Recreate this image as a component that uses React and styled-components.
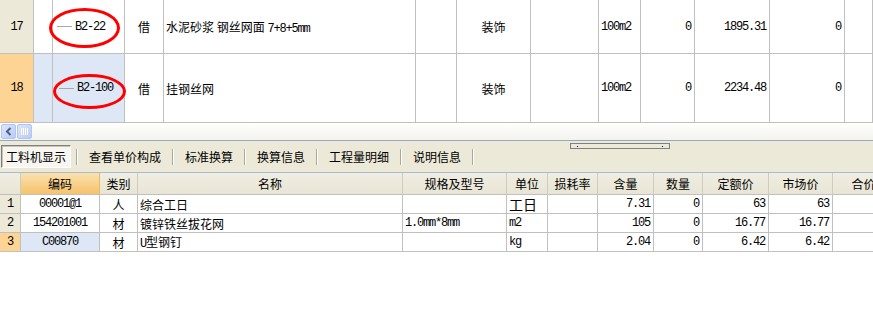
import React from "react";
import styled, { createGlobalStyle, css } from "styled-components";

const Global = createGlobalStyle`
  html, body { margin: 0; padding: 0; background: #fff; }
  body { width: 873px; height: 325px; overflow: hidden; font-family: "Noto Sans CJK SC", sans-serif; font-size: 12px; color: #000; }
`;

const Page = styled.div`
  width: 873px;
  height: 325px;
  overflow: hidden;
  position: relative;
  display: flex;
  flex-direction: column;
`;

const GRID_LINE = "#c0c0c0";

const TopGrid = styled.div`
  display: grid;
  grid-template-columns: 34px 19px 72px 39px 252px 41px 74px 68px 42px 54px 75px 75px 1fr;
`;

const monoText = css`
  font-family: "Liberation Mono", monospace;
  font-size: 12px;
  letter-spacing: -1.2px;
`;

const Cell = styled.div`
  position: relative;
  box-sizing: border-box;
  height: ${(p) => p.$h}px;
  border-right: 1px solid ${GRID_LINE};
  border-bottom: 1px solid ${GRID_LINE};
  background: ${(p) => p.$bg || "#fff"};
  display: flex;
  align-items: center;
  justify-content: ${(p) => (p.$align === "right" ? "flex-end" : p.$align === "center" ? "center" : "flex-start")};
  padding: ${(p) => (p.$align === "right" ? "0 3px 0 0" : p.$align === "center" ? "0" : "0 0 0 2px")};
  white-space: nowrap;
  ${(p) => p.$mono && monoText}
`;

const Mono = styled.span`
  ${monoText}
`;

const CodeWrap = styled.div`
  display: flex;
  align-items: center;
  gap: 3px;
  padding-left: ${(p) => p.$indent}px;
`;

const TreeLine = styled.span`
  width: 15px;
  height: 1px;
  background: #a8a8a8;
`;

const Ring = styled.div`
  position: absolute;
  z-index: 2;
  box-sizing: border-box;
  border: 3px solid #ff0000;
  border-radius: 50%;
  left: ${(p) => p.$l}px;
  top: ${(p) => p.$t}px;
  width: ${(p) => p.$w}px;
  height: ${(p) => p.$hh}px;
`;

const ScrollBar = styled.div`
  height: 17px;
  box-sizing: border-box;
  background: linear-gradient(#ffffff, #f3f2ec);
  display: flex;
  align-items: center;
  gap: 1px;
  padding-left: 1px;
`;

const ScrollBtn = styled.div`
  width: 15px;
  height: 15px;
  box-sizing: border-box;
  border: 1px solid #b4c6ee;
  border-radius: 2px;
  background: linear-gradient(135deg, #dce6fd, #b9cbf5);
  display: flex;
  align-items: center;
  justify-content: center;
`;

const Divider = styled.div`
  height: 1px;
  background: ${(p) => p.$c};
`;

const TabBar = styled.div`
  height: 31px;
  background: #ece9d8;
  display: flex;
  align-items: center;
  padding-left: 1px;
  position: relative;
`;

const Tab = styled.div`
  box-sizing: border-box;
  height: 23px;
  display: flex;
  align-items: center;
  padding: ${(p) => (p.$active ? "0 4px" : "0 10px")};
  font-size: 12px;
  ${(p) =>
    p.$active &&
    css`
      border: 1px solid;
      border-color: #808080 #ffffff #ffffff #808080;
      box-shadow: inset 1px 1px 0 #c8c4b4;
      background: #f7f6f0;
      margin-right: 4px;
    `}
`;

const Sep = styled.div`
  width: 1px;
  height: 16px;
  background: #aca899;
  border-right: 1px solid #fff;
  margin: 0 1px;
`;

const Grip = styled.div`
  position: absolute;
  left: 570px;
  top: 2px;
  width: 100px;
  height: 6px;
  box-sizing: border-box;
  border: 1px solid #808080;
  display: flex;
  align-items: center;
  justify-content: space-between;
  padding: 0 6px;
`;

const Dot = styled.span`
  width: 1px;
  height: 1px;
  background: #000080;
`;

const LowGrid = styled.div`
  display: grid;
  grid-template-columns: 21px 79px 38px 265px 104px 41px 50px 56px 49px 66px 64px 62px;
  width: 895px;
`;

const Head = styled.div`
  box-sizing: border-box;
  height: 22px;
  border-right: 1px solid ${(p) => (p.$hl ? "#e8b86a" : "#cfcbbd")};
  border-bottom: 1px solid ${GRID_LINE};
  background: ${(p) => (p.$hl ? "linear-gradient(#fbe1ae, #f5c36c)" : "linear-gradient(#f0eee2, #e8e5d5)")};
  display: flex;
  align-items: center;
  justify-content: center;
  font-size: 12px;
  white-space: nowrap;
`;

const Big = styled.span`
  font-size: 14px;
  line-height: 1;
`;

const Inline = styled.span`
  white-space: pre;
`;

const BEIGE = "#ece9d8";
const ORANGE = "#fed495";
const BLUE = "#dee7f5";

const topRows = [
  {
    h: 54, no: "17", sel: false, code: "B2-22", ring: { l: -4, t: 8, w: 71, h: 40 }, indent: 2,
    desc: ["水泥砂浆 钢丝网面 ", "7+8+5mm"], type: "装饰", unit: "100m2", a: "0", price: "1895.31", b: "0",
  },
  {
    h: 69, no: "18", sel: true, code: "B2-100", ring: { l: 0, t: 20, w: 73, h: 35 }, indent: 4,
    desc: ["挂钢丝网", ""], type: "装饰", unit: "100m2", a: "0", price: "2234.48", b: "0",
  },
];

const lowRows = [
  { no: "1", code: "00001@1", cat: "人", name: "综合工日", spec: "", unit: "工日", bigUnit: true, qty: "7.31", num: "0", quota: "63", market: "63" },
  { no: "2", code: "154201001", cat: "材", name: "镀锌铁丝拔花网", spec: "1.0mm*8mm", unit: "m2", qty: "105", num: "0", quota: "16.77", market: "16.77" },
  { no: "3", code: "C00870", cat: "材", name: "U型钢钉", spec: "", unit: "kg", qty: "2.04", num: "0", quota: "6.42", market: "6.42", sel: true },
];

const heads = ["", "编码", "类别", "名称", "规格及型号", "单位", "损耗率", "含量", "数量", "定额价", "市场价", "合价"];

export default function App() {
  return (
    <Page>
      <Global />
      <TopGrid>
        {topRows.map((r) => (
          <React.Fragment key={r.no}>
            <Cell $h={r.h} $bg={r.sel ? ORANGE : BEIGE} $align="center" $mono>{r.no}</Cell>
            <Cell $h={r.h} $bg={r.sel ? BLUE : "#fff"} />
            <Cell $h={r.h} $bg={r.sel ? BLUE : "#fff"}>
              <CodeWrap $indent={r.indent}>
                <TreeLine />
                <Mono>{r.code}</Mono>
              </CodeWrap>
              <Ring $l={r.ring.l} $t={r.ring.t} $w={r.ring.w} $hh={r.ring.h} />
            </Cell>
            <Cell $h={r.h} $align="center">借</Cell>
            <Cell $h={r.h}>
              <Inline>
                {r.desc[0]}
                {r.desc[1] && <Mono>{r.desc[1]}</Mono>}
              </Inline>
            </Cell>
            <Cell $h={r.h} />
            <Cell $h={r.h} $align="center">{r.type}</Cell>
            <Cell $h={r.h} />
            <Cell $h={r.h} $mono>{r.unit}</Cell>
            <Cell $h={r.h} $align="right" $mono>{r.a}</Cell>
            <Cell $h={r.h} $align="right" $mono>{r.price}</Cell>
            <Cell $h={r.h} $align="right" $mono>{r.b}</Cell>
            <Cell $h={r.h} />
          </React.Fragment>
        ))}
      </TopGrid>
      <ScrollBar>
        <ScrollBtn>
          <svg width="7" height="9" viewBox="0 0 7 9">
            <path d="M5.5 1 L2 4.5 L5.5 8" fill="none" stroke="#4d6185" strokeWidth="2" />
          </svg>
        </ScrollBtn>
        <ScrollBtn>
          <svg width="7" height="7" viewBox="0 0 7 7">
            <path d="M0.5 0v7M2.5 0v7M4.5 0v7M6.5 0v7" stroke="#ffffff" strokeWidth="1" />
          </svg>
        </ScrollBtn>
      </ScrollBar>
      <Divider $c="#94a9c6" />
      <TabBar>
        <Grip>
          <Dot />
          <Dot />
        </Grip>
        <Tab $active>工料机显示</Tab>
        <Sep />
        <Tab>查看单价构成</Tab>
        <Sep />
        <Tab>标准换算</Tab>
        <Sep />
        <Tab>换算信息</Tab>
        <Sep />
        <Tab>工程量明细</Tab>
        <Sep />
        <Tab>说明信息</Tab>
        <Sep />
      </TabBar>
      <Divider $c="#a9bad1" />
      <LowGrid>
        {heads.map((h, i) => (
          <Head key={i} $hl={i === 1}>{h}</Head>
        ))}
        {lowRows.map((r) => (
          <React.Fragment key={r.no}>
            <Cell $h={19} $bg={r.sel ? ORANGE : BEIGE} $align="center" $mono>{r.no}</Cell>
            <Cell $h={19} $bg={r.sel ? BLUE : "#fff"} $align="center" $mono>{r.code}</Cell>
            <Cell $h={19} $align="center">{r.cat}</Cell>
            <Cell $h={19}>
              {r.name.startsWith("U") ? (
                <Inline>
                  <Mono>U</Mono>
                  {r.name.slice(1)}
                </Inline>
              ) : (
                r.name
              )}
            </Cell>
            <Cell $h={19} $mono>{r.spec}</Cell>
            <Cell $h={19} $mono={!r.bigUnit}>{r.bigUnit ? <Big>{r.unit}</Big> : r.unit}</Cell>
            <Cell $h={19} />
            <Cell $h={19} $align="right" $mono>{r.qty}</Cell>
            <Cell $h={19} $align="right" $mono>{r.num}</Cell>
            <Cell $h={19} $align="right" $mono>{r.quota}</Cell>
            <Cell $h={19} $align="right" $mono>{r.market}</Cell>
            <Cell $h={19} />
          </React.Fragment>
        ))}
      </LowGrid>
    </Page>
  );
}
